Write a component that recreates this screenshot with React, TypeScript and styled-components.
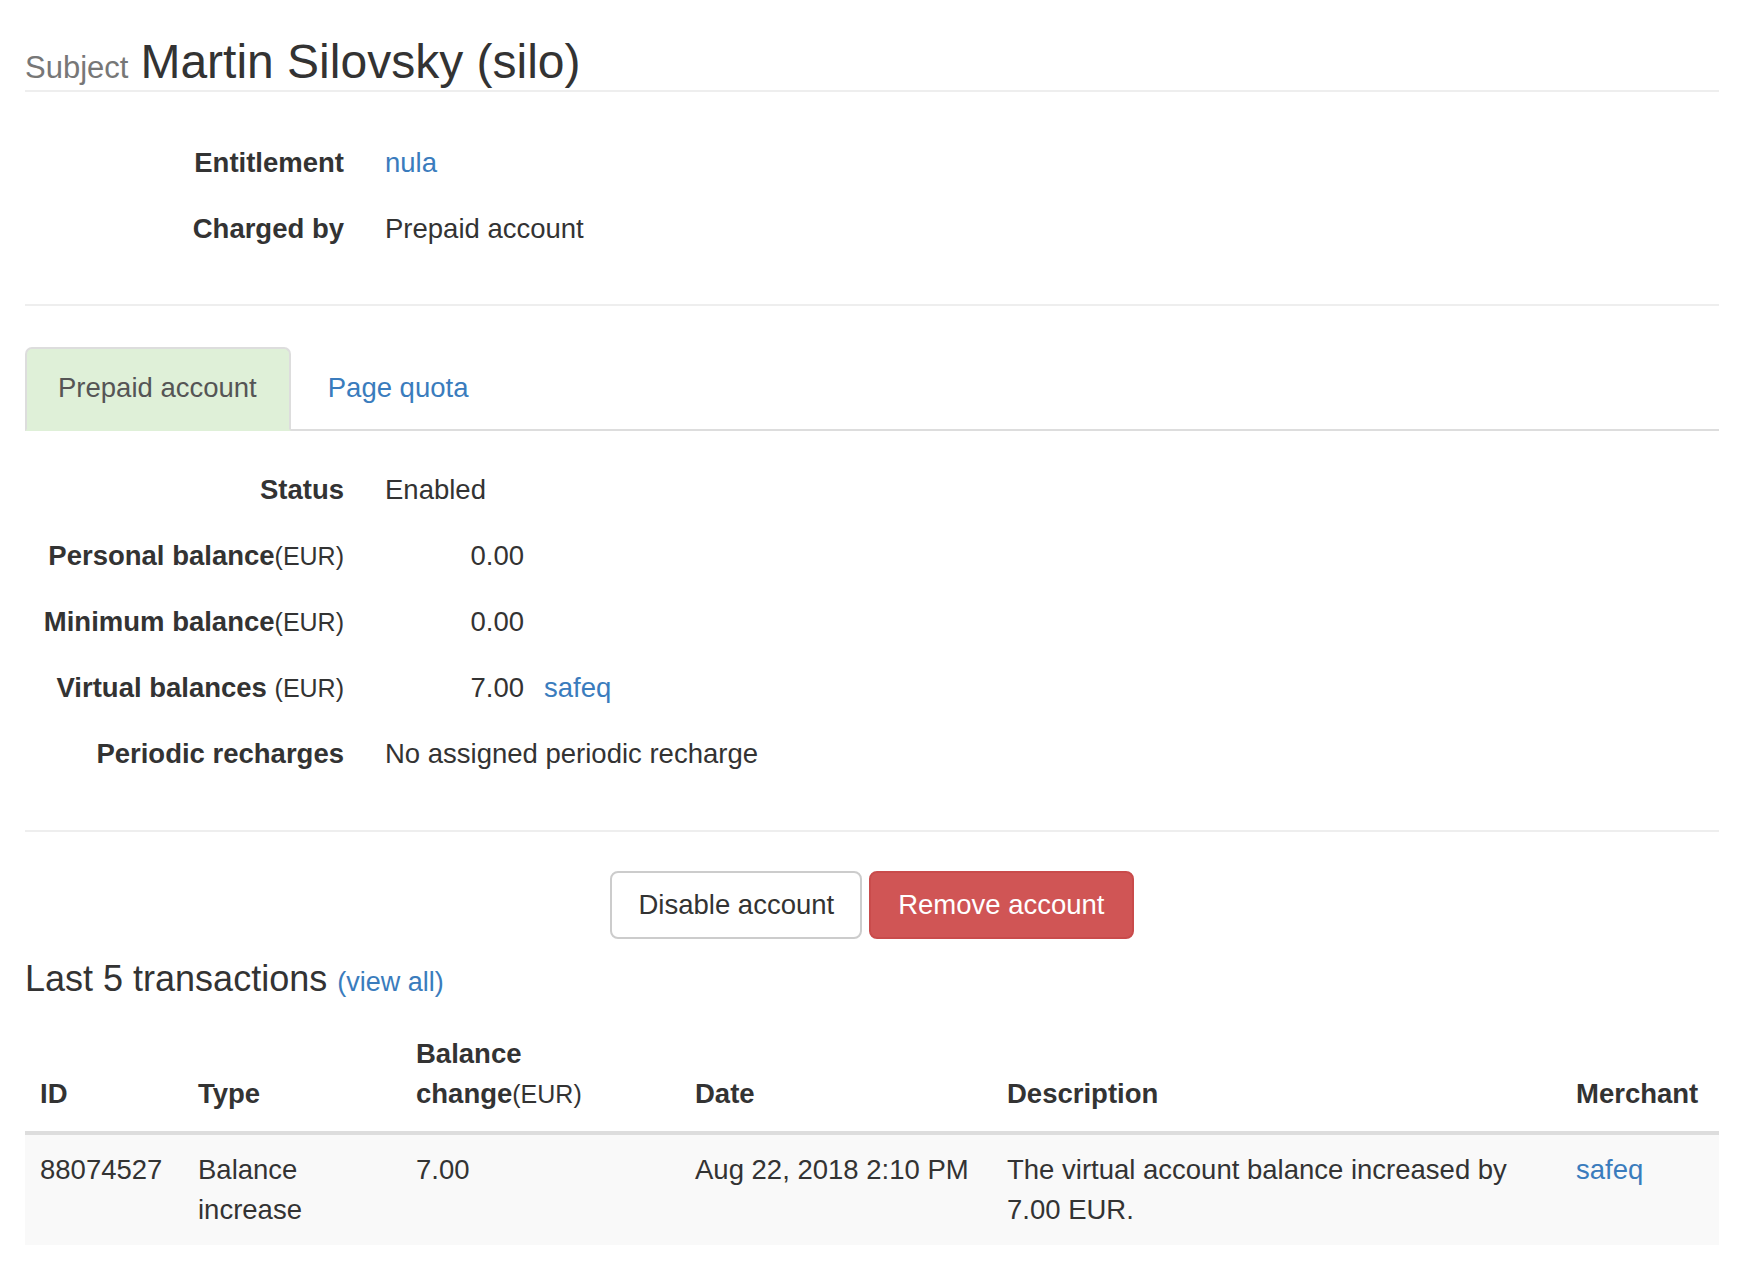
import React from "react";
import styled, { createGlobalStyle } from "styled-components";

const GlobalStyle = createGlobalStyle`
  html, body {
    margin: 0;
    padding: 0;
    background: #ffffff;
  }
  body {
    font-family: "Liberation Sans", Arial, Helvetica, sans-serif;
    font-size: 27.5px;
    line-height: 40px;
    color: #333333;
  }
  * { box-sizing: border-box; }
`;

const Page = styled.div`
  padding: 0 28px 40px 25px;
`;

const PageHeader = styled.h1`
  margin: 40px 0 0;
  padding-bottom: 0;
  border-bottom: 2px solid #eeeeee;
  font-size: 48px;
  line-height: 44px;
  font-weight: 400;
  color: #333333;
`;

const HeaderSmall = styled.small`
  font-size: 31px;
  color: #777777;
  margin-right: 12px;
`;

const InfoList = styled.dl<{ $top: number }>`
  display: grid;
  grid-template-columns: 319px 1fr;
  column-gap: 41px;
  grid-auto-rows: 66px;
  align-items: center;
  margin: ${(p) => p.$top}px 0 0;
`;

const Label = styled.dt`
  text-align: right;
  font-weight: 700;
  white-space: nowrap;
`;

const Unit = styled.span`
  font-weight: 400;
  font-size: 25px;
`;

const Value = styled.dd`
  margin: 0;
  display: flex;
  align-items: center;
`;

const Amount = styled.span`
  display: inline-block;
  width: 139px;
  text-align: right;
`;

const Link = styled.a<{ $gap?: number }>`
  color: #3a7cbd;
  text-decoration: none;
  margin-left: ${(p) => p.$gap ?? 0}px;
`;

const Rule = styled.hr<{ $top: number }>`
  margin: ${(p) => p.$top}px 0 0;
  border: 0;
  border-top: 2px solid #eeeeee;
  height: 0;
`;

const TabList = styled.ul`
  display: flex;
  list-style: none;
  margin: 41px 0 0;
  padding: 0;
  border-bottom: 2px solid #dddddd;
`;

const Tab = styled.li<{ $active?: boolean }>`
  margin: 0 4px -2px 0;
  padding: 19px 32px 21px 31px;
  line-height: 40px;
  border: 2px solid ${(p) => (p.$active ? "#dddddd" : "transparent")};
  border-bottom-color: transparent;
  border-radius: 7px 7px 0 0;
  background: ${(p) => (p.$active ? "#dff0d8" : "transparent")};
  color: ${(p) => (p.$active ? "#555555" : "#3a7cbd")};
`;

const Actions = styled.div`
  display: flex;
  justify-content: center;
  gap: 7px;
  margin-top: 39px;
`;

const Button = styled.button<{ $danger?: boolean }>`
  font-family: inherit;
  font-size: 27.5px;
  line-height: 40px;
  padding: 12px ${(p) => (p.$danger ? 27 : 26)}px;
  border-radius: 8px;
  border: 2px solid ${(p) => (p.$danger ? "#c94b4b" : "#cccccc")};
  background: ${(p) => (p.$danger ? "#d05555" : "#ffffff")};
  color: ${(p) => (p.$danger ? "#ffffff" : "#333333")};
  cursor: pointer;
`;

const SectionTitle = styled.h4`
  margin: 20px 0 0;
  font-size: 36px;
  line-height: 40px;
  font-weight: 400;
  color: #333333;
`;

const SmallLink = styled.a`
  font-size: 27px;
  color: #3a7cbd;
  text-decoration: none;
`;

const Table = styled.table`
  width: 100%;
  margin-top: 17px;
  border-collapse: collapse;
  table-layout: fixed;
`;

const HeadCell = styled.th`
  padding: 15px 15px 17px;
  text-align: left;
  vertical-align: bottom;
  font-weight: 700;
  border-bottom: 4px solid #dddddd;
`;

const BodyRow = styled.tr`
  background: #f9f9f9;
`;

const Cell = styled.td`
  padding: 15px;
  vertical-align: top;
`;

const columns = [158, 218, 279, 312, 569, 158];

export default function App() {
  return (
    <>
      <GlobalStyle />
      <Page>
        <PageHeader>
          <HeaderSmall>Subject</HeaderSmall>Martin Silovsky (silo)
        </PageHeader>

        <InfoList $top={38}>
          <Label>Entitlement</Label>
          <Value>
            <Link href="#">nula</Link>
          </Value>
          <Label>Charged by</Label>
          <Value>Prepaid account</Value>
        </InfoList>

        <Rule $top={42} />

        <TabList>
          <Tab $active>Prepaid account</Tab>
          <Tab>Page quota</Tab>
        </TabList>

        <InfoList $top={26}>
          <Label>Status</Label>
          <Value>Enabled</Value>
          <Label>
            Personal balance<Unit>(EUR)</Unit>
          </Label>
          <Value>
            <Amount>0.00</Amount>
          </Value>
          <Label>
            Minimum balance<Unit>(EUR)</Unit>
          </Label>
          <Value>
            <Amount>0.00</Amount>
          </Value>
          <Label>
            Virtual balances <Unit>(EUR)</Unit>
          </Label>
          <Value>
            <Amount>7.00</Amount>
            <Link href="#" $gap={20}>
              safeq
            </Link>
          </Value>
          <Label>Periodic recharges</Label>
          <Value>No assigned periodic recharge</Value>
        </InfoList>

        <Rule $top={43} />

        <Actions>
          <Button>Disable account</Button>
          <Button $danger>Remove account</Button>
        </Actions>

        <SectionTitle>
          Last 5 transactions <SmallLink href="#">(view all)</SmallLink>
        </SectionTitle>

        <Table>
          <colgroup>
            {columns.map((w, i) => (
              <col key={i} style={{ width: `${w}px` }} />
            ))}
          </colgroup>
          <thead>
            <tr>
              <HeadCell>ID</HeadCell>
              <HeadCell>Type</HeadCell>
              <HeadCell>
                Balance change<Unit>(EUR)</Unit>
              </HeadCell>
              <HeadCell>Date</HeadCell>
              <HeadCell>Description</HeadCell>
              <HeadCell>Merchant</HeadCell>
            </tr>
          </thead>
          <tbody>
            <BodyRow>
              <Cell>88074527</Cell>
              <Cell>Balance increase</Cell>
              <Cell>7.00</Cell>
              <Cell>Aug 22, 2018 2:10 PM</Cell>
              <Cell>The virtual account balance increased by 7.00 EUR.</Cell>
              <Cell>
                <Link href="#">safeq</Link>
              </Cell>
            </BodyRow>
          </tbody>
        </Table>
      </Page>
    </>
  );
}
